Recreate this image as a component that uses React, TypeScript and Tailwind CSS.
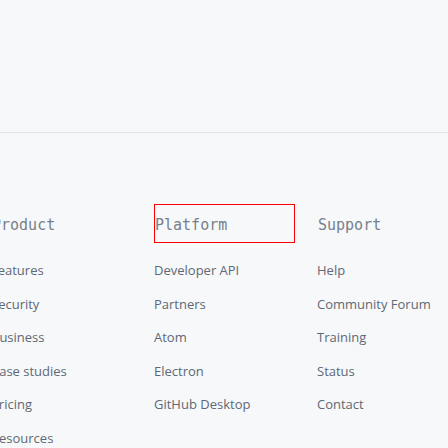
const columns = [
  {
    title: 'Product',
    links: ['Features', 'Security', 'Business', 'Case studies', 'Pricing', 'Resources'],
  },
  {
    title: 'Platform',
    links: ['Developer API', 'Partners', 'Atom', 'Electron', 'GitHub Desktop'],
    highlighted: true,
  },
  {
    title: 'Support',
    links: ['Help', 'Community Forum', 'Training', 'Status', 'Contact'],
  },
];

const App = () => {
  return (
    <div className="h-[448px] w-[448px] overflow-hidden bg-[#f6f8fa]">
      {/* Top area */}
      <div className="h-[133px] border-b border-[#e1e4e8]" />

      {/* Footer columns */}
      <div className="ml-[-9px] mt-[71px] flex gap-[22px]">
        {columns.map((col) => (
          <div key={col.title} className="w-[141px] shrink-0">
            <h3
              className={`flex h-[39px] items-center pt-[4px] font-['DejaVu_Sans_Mono',monospace] text-[15px] text-[#77808a] ${
                col.highlighted ? 'border border-[#ff0000] pl-0' : 'pl-px'
              }`}
            >
              {col.title}
            </h3>
            <ul className="mt-[18px] flex flex-col gap-[14px] font-['Open_Sans',sans-serif] text-[13px] leading-[19.5px] text-[#5f6874]">
              {col.links.map((link) => (
                <li key={link}>{link}</li>
              ))}
            </ul>
          </div>
        ))}
      </div>
    </div>
  );
};

export default App;
